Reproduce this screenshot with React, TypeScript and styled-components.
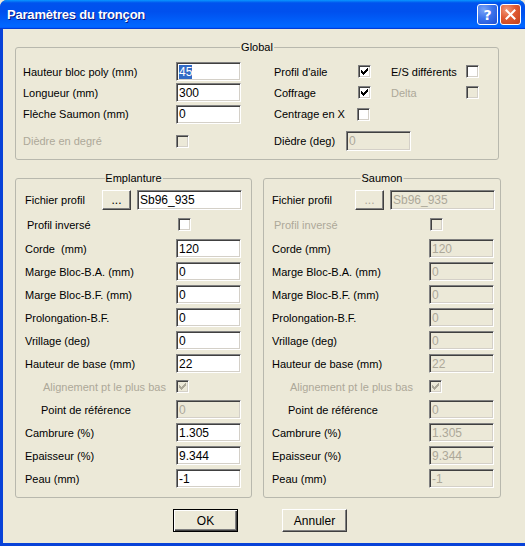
import React from 'react';
import styled, { createGlobalStyle } from 'styled-components';

const GlobalStyle = createGlobalStyle`
  html, body {
    margin: 0;
    padding: 0;
    background: #ece9d8;
  }
  body {
    font-family: "Liberation Sans", Arial, sans-serif;
    font-size: 11px;
    color: #000;
  }
`;

const Window = styled.div`
  width: 525px;
  height: 546px;
  display: flex;
  flex-direction: column;
  background: #0842d8;
  border-top-left-radius: 7px;
  border-top-right-radius: 7px;
  overflow: hidden;
`;

const TitleBar = styled.div`
  height: 29px;
  flex: none;
  display: flex;
  align-items: center;
  padding: 0 4px 0 7px;
  background: linear-gradient(
    to bottom,
    #0997ff 0%,
    #0053ee 10%,
    #0050ee 40%,
    #0066ff 88%,
    #0066ff 93%,
    #005bff 95%,
    #003dd7 97%,
    #003dd7 100%
  );
`;

const TitleText = styled.div`
  flex: 1;
  font-family: "Liberation Sans", Arial, sans-serif;
  font-weight: bold;
  font-size: 13px;
  color: #fff;
  text-shadow: 1px 1px 0 #0a1883;
  letter-spacing: -0.2px;
`;

const CaptionButton = styled.div<{ $kind: 'help' | 'close' }>`
  box-sizing: border-box;
  width: 21px;
  height: 21px;
  margin-left: 2px;
  border: 1px solid #fff;
  border-radius: 3px;
  display: flex;
  align-items: center;
  justify-content: center;
  color: #fff;
  font-family: "DejaVu Sans", sans-serif;
  font-weight: bold;
  font-size: 14px;
  background: ${({ $kind }) =>
    $kind === 'help'
      ? 'radial-gradient(circle at 30% 25%, #7aa5f7 0%, #3c74ec 45%, #1c4ed2 100%)'
      : 'radial-gradient(circle at 30% 25%, #f29a7c 0%, #e05a32 45%, #c2401b 100%)'};
`;

const Client = styled.div`
  flex: 1;
  margin: 0 0 3px 3px;
  background: #ece9d8;
  padding: 18px 0 0 12px;
  display: flex;
  flex-direction: column;
  align-items: flex-start;
`;

const Group = styled.div<{ $width: number; $height: number }>`
  position: relative;
  box-sizing: border-box;
  width: ${({ $width }) => $width}px;
  height: ${({ $height }) => $height}px;
  border: 1px solid #b8b8ad;
  border-radius: 3px;
`;

const Caption = styled.span`
  position: absolute;
  top: -7px;
  left: 50%;
  transform: translateX(-50%);
  padding: 0 1px;
  background: #ece9d8;
  line-height: 13px;
  white-space: nowrap;
`;

const GlobalGrid = styled.div`
  display: grid;
  grid-template-columns: 153px 65px 33px 84px 13px 20px 75px 13px;
  grid-template-rows: 21px 21px 22px 32px;
  align-items: center;
  padding: 13px 0 0 7px;
`;

const Label = styled.span<{ $disabled?: boolean; $width?: number; $indent?: number }>`
  box-sizing: border-box;
  white-space: pre;
  color: ${({ $disabled }) => ($disabled ? '#aca899' : '#000')};
  ${({ $width }) => ($width ? `width: ${$width}px; flex: none;` : '')}
  padding-left: ${({ $indent }) => $indent ?? 0}px;
`;

const Span = styled.div<{ $from: number; $to: number }>`
  grid-column: ${({ $from, $to }) => `${$from} / ${$to}`};
  display: flex;
  align-items: center;
`;

const TextBox = styled.div<{ $width: number; $height?: number; $disabled?: boolean }>`
  box-sizing: border-box;
  flex: none;
  width: ${({ $width }) => $width}px;
  height: ${({ $height }) => $height ?? 19}px;
  padding: 0 2px;
  border-style: solid;
  border-width: 1px;
  border-color: #808080 #ffffff #ffffff #808080;
  box-shadow: inset 1px 1px 0 #404040, inset -1px -1px 0 #d4d0c8;
  background: ${({ $disabled }) => ($disabled ? '#ece9d8' : '#fff')};
  color: ${({ $disabled }) => ($disabled ? '#aca899' : '#000')};
  display: flex;
  align-items: center;
  white-space: nowrap;
  overflow: hidden;
  font-size: 12px;
`;

const Selected = styled.span`
  background: #316ac5;
  color: #fff;
`;

const CheckBox = styled.span<{ $disabled?: boolean; $offset?: number }>`
  box-sizing: border-box;
  flex: none;
  width: 13px;
  height: 13px;
  margin-left: ${({ $offset }) => $offset ?? 0}px;
  border-style: solid;
  border-width: 1px;
  border-color: #808080 #ffffff #ffffff #808080;
  box-shadow: inset 1px 1px 0 #404040, inset -1px -1px 0 #d4d0c8;
  background: ${({ $disabled }) => ($disabled ? '#ece9d8' : '#fff')};
  display: flex;
  align-items: center;
  justify-content: center;
  color: ${({ $disabled }) => ($disabled ? '#aca899' : '#000')};
`;

const Sections = styled.div`
  display: flex;
  gap: 11px;
  margin-top: 18px;
`;

const SectionBody = styled.div<{ $pad: number }>`
  display: flex;
  flex-direction: column;
  padding: 9px 0 0 ${({ $pad }) => $pad}px;
`;

const Row = styled.div<{ $height: number }>`
  display: flex;
  align-items: center;
  height: ${({ $height }) => $height}px;
`;

const PushButton = styled.div<{ $width: number; $height: number; $default?: boolean; $disabled?: boolean }>`
  box-sizing: border-box;
  flex: none;
  width: ${({ $width }) => $width}px;
  height: ${({ $height }) => $height}px;
  display: flex;
  align-items: center;
  justify-content: center;
  background: #ece9d8;
  color: ${({ $disabled }) => ($disabled ? '#aca899' : '#000')};
  border: 1px solid;
  border-color: ${({ $default }) => ($default ? '#000' : '#fff #404040 #404040 #fff')};
  box-shadow: ${({ $default }) =>
    $default
      ? 'inset 1px 1px 0 #fff, inset -1px -1px 0 #404040, inset -2px -2px 0 #808080'
      : 'inset -1px -1px 0 #808080'};
  font-size: 12px;
`;

const Footer = styled.div`
  display: flex;
  gap: 44px;
  margin: 11px 0 0 158px;
`;

const Check = ({ checked }: { checked?: boolean }) =>
  checked ? (
    <svg width="7" height="7" viewBox="0 0 7 7" shapeRendering="crispEdges">
      <path
        fill="currentColor"
        d="M6 0h1v3h-1v1h-1v1h-1v1h-1v1h-1v-1h-1v-1h-1v-3h1v1h1v1h1v-1h1v-1h1z"
      />
    </svg>
  ) : null;

type SectionRow =
  | { kind: 'file'; value: string }
  | { kind: 'check'; label: string; indent: number; offset: number; checked: boolean; labelOff?: boolean; boxOff?: boolean }
  | { kind: 'field'; label: string; value: string; indent?: number; fieldOff?: boolean };

const emplanture: SectionRow[] = [
  { kind: 'file', value: 'Sb96_935' },
  { kind: 'check', label: 'Profil inversé', indent: 2, offset: 2, checked: false },
  { kind: 'field', label: 'Corde  (mm)', value: '120' },
  { kind: 'field', label: 'Marge Bloc-B.A. (mm)', value: '0' },
  { kind: 'field', label: 'Marge Bloc-B.F. (mm)', value: '0' },
  { kind: 'field', label: 'Prolongation-B.F.', value: '0' },
  { kind: 'field', label: 'Vrillage (deg)', value: '0' },
  { kind: 'field', label: 'Hauteur de base (mm)', value: '22' },
  { kind: 'check', label: 'Alignement pt le plus bas', indent: 18, offset: 0, checked: true, labelOff: true, boxOff: true },
  { kind: 'field', label: 'Point de référence', value: '0', indent: 16, fieldOff: true },
  { kind: 'field', label: 'Cambrure (%)', value: '1.305' },
  { kind: 'field', label: 'Epaisseur (%)', value: '9.344' },
  { kind: 'field', label: 'Peau (mm)', value: '-1' },
];

const saumon: SectionRow[] = [
  { kind: 'file', value: 'Sb96_935' },
  { kind: 'check', label: 'Profil inversé', indent: 2, offset: 1, checked: false, labelOff: true, boxOff: true },
  { kind: 'field', label: 'Corde (mm)', value: '120', fieldOff: true },
  { kind: 'field', label: 'Marge Bloc-B.A. (mm)', value: '0', fieldOff: true },
  { kind: 'field', label: 'Marge Bloc-B.F. (mm)', value: '0', fieldOff: true },
  { kind: 'field', label: 'Prolongation-B.F.', value: '0', fieldOff: true },
  { kind: 'field', label: 'Vrillage (deg)', value: '0', fieldOff: true },
  { kind: 'field', label: 'Hauteur de base (mm)', value: '22', fieldOff: true },
  { kind: 'check', label: 'Alignement pt le plus bas', indent: 18, offset: 0, checked: true, labelOff: true, boxOff: true },
  { kind: 'field', label: 'Point de référence', value: '0', indent: 16, fieldOff: true },
  { kind: 'field', label: 'Cambrure (%)', value: '1.305', fieldOff: true },
  { kind: 'field', label: 'Epaisseur (%)', value: '9.344', fieldOff: true },
  { kind: 'field', label: 'Peau (mm)', value: '-1', fieldOff: true },
];

const rowHeight = (i: number) => (i === 0 ? 24 : i === 1 ? 25 : 23);

const Section: React.FC<{
  title: string;
  width: number;
  pad: number;
  labelWidth: number;
  rows: SectionRow[];
  locked?: boolean;
}> = ({ title, width, pad, labelWidth, rows, locked }) => (
  <Group $width={width} $height={320}>
    <Caption>{title}</Caption>
    <SectionBody $pad={pad}>
      {rows.map((row, i) => (
        <Row key={i} $height={rowHeight(i)}>
          {row.kind === 'file' && (
            <>
              <Label $width={labelWidth - 74}>Fichier profil</Label>
              <PushButton $width={29} $height={20} $disabled={locked}>...</PushButton>
              <TextBox $width={105} $height={20} $disabled={locked} style={{ marginLeft: 6 }}>
                {row.value}
              </TextBox>
            </>
          )}
          {row.kind === 'check' && (
            <>
              <Label $width={labelWidth} $indent={row.indent} $disabled={row.labelOff}>
                {row.label}
              </Label>
              <CheckBox $offset={row.offset} $disabled={row.boxOff}>
                <Check checked={row.checked} />
              </CheckBox>
            </>
          )}
          {row.kind === 'field' && (
            <>
              <Label $width={labelWidth} $indent={row.indent}>
                {row.label}
              </Label>
              <TextBox $width={65} $disabled={row.fieldOff}>
                {row.value}
              </TextBox>
            </>
          )}
        </Row>
      ))}
    </SectionBody>
  </Group>
);

const App: React.FC = () => (
  <>
    <GlobalStyle />
    <Window>
      <TitleBar>
        <TitleText>Paramètres du tronçon</TitleText>
        <CaptionButton $kind="help">?</CaptionButton>
        <CaptionButton $kind="close">
          <svg width="11" height="11" viewBox="0 0 11 11">
            <path d="M1.5 1.5L9.5 9.5M9.5 1.5L1.5 9.5" stroke="#fff" strokeWidth="2" strokeLinecap="square" />
          </svg>
        </CaptionButton>
      </TitleBar>
      <Client>
        <Group $width={484} $height={113}>
          <Caption>Global</Caption>
          <GlobalGrid>
            <Label>Hauteur bloc poly (mm)</Label>
            <TextBox $width={65}>
              <Selected>45</Selected>
            </TextBox>
            <span />
            <Label>Profil d'aile</Label>
            <CheckBox>
              <Check checked />
            </CheckBox>
            <span />
            <Label>E/S différents</Label>
            <CheckBox />

            <Label>Longueur (mm)</Label>
            <TextBox $width={65}>300</TextBox>
            <span />
            <Label>Coffrage</Label>
            <CheckBox>
              <Check checked />
            </CheckBox>
            <span />
            <Label $disabled>Delta</Label>
            <CheckBox $disabled />

            <Label>Flèche Saumon (mm)</Label>
            <TextBox $width={65}>0</TextBox>
            <span />
            <Label>Centrage en X</Label>
            <CheckBox $offset={-1} />
            <span />
            <span />
            <span />

            <Label $disabled>Dièdre en degré</Label>
            <CheckBox $disabled />
            <span />
            <Span $from={4} $to={9}>
              <Label $width={72}>Dièdre (deg)</Label>
              <TextBox $width={65} $height={20} $disabled>
                0
              </TextBox>
            </Span>
          </GlobalGrid>
        </Group>
        <Sections>
          <Section title="Emplanture" width={237} pad={9} labelWidth={151} rows={emplanture} />
          <Section title="Saumon" width={238} pad={8} labelWidth={157} rows={saumon} locked />
        </Sections>
        <Footer>
          <PushButton $width={65} $height={23} $default>
            OK
          </PushButton>
          <PushButton $width={65} $height={23}>
            Annuler
          </PushButton>
        </Footer>
      </Client>
    </Window>
  </>
);

export default App;
